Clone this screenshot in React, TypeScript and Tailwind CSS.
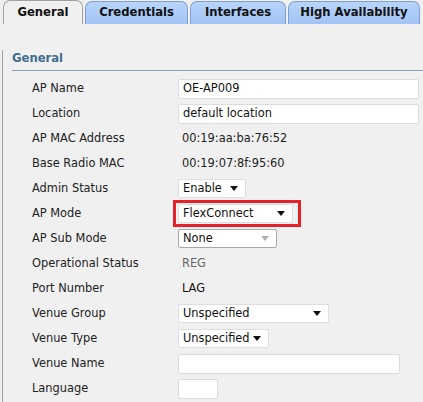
import React from "react";

const font = { fontFamily: '"DejaVu Sans", Verdana, sans-serif' };

function Tab({ label, active, w }: { label: string; active?: boolean; w: string }) {
  return (
    <div
      className={`${w} flex h-[23px] items-center justify-center rounded-t-[7px] border border-b-0 text-[11.6px] font-bold text-[#111] ${
        active ? "h-[24px] border-[#a0a0a0] bg-[#f0f0f0]" : "border-[#7f9fd0] bg-gradient-to-b from-[#b8d4fb] to-[#a2c4f4]"
      }`}
    >
      {label}
    </div>
  );
}

function Select({ value, w, disabled }: { value: string; w: string; disabled?: boolean }) {
  return (
    <div
      className={`${w} flex h-[19px] items-center justify-between rounded-[2px] border bg-white pl-[4px] pr-[7px] text-[11.4px] ${
        disabled ? "border-[#a8a8a8]" : "border-[#dedede]"
      }`}
    >
      <span className="text-[#111]">{value}</span>
      <span className={`h-0 w-0 border-x-[4px] border-t-[5px] border-x-transparent ${disabled ? "border-t-[#b0b0b0]" : "border-t-[#111]"}`} />
    </div>
  );
}

function Input({ value, w }: { value?: string; w: string }) {
  return (
    <div className={`${w} flex h-[20px] items-center rounded-[2px] border border-[#dcdcdc] bg-white pl-[4px] text-[11.4px] text-[#111]`}>
      {value}
    </div>
  );
}

function Row({ label, children }: { label: string; children: React.ReactNode }) {
  return (
    <div className="flex h-[25px] items-center">
      <div className="w-[175px] shrink-0 pl-[29px] text-[11.4px] text-[#222]">{label}</div>
      <div className="flex items-center">{children}</div>
    </div>
  );
}

export default function App() {
  return (
    <div className="h-[402px] w-[423px] overflow-hidden bg-[#f0f0f0]" style={font}>
      <div className="flex h-[24px] items-end gap-[2px] pl-[3px]">
        <Tab label="General" active w="w-[80px]" />
        <Tab label="Credentials" w="w-[103px]" />
        <Tab label="Interfaces" w="w-[96px]" />
        <Tab label="High Availability" w="w-[132px]" />
      </div>
      <div className="ml-[2px] h-[380px] border-l border-[#a0a0a0]">
        <div className="ml-[9px] mt-[26px] border-b border-[#8e9cc4] pb-[3px] text-[11.6px] font-bold text-[#3f6e8f]">General</div>
        <div className="pt-[5px]">
          <Row label="AP Name">
            <Input value="OE-AP009" w="w-[241px]" />
          </Row>
          <Row label="Location">
            <Input value="default location" w="w-[241px]" />
          </Row>
          <Row label="AP MAC Address">
            <span className="pl-[4px] text-[11.4px] text-[#222]">00:19:aa:ba:76:52</span>
          </Row>
          <Row label="Base Radio MAC">
            <span className="pl-[4px] text-[11.4px] text-[#222]">00:19:07:8f:95:60</span>
          </Row>
          <Row label="Admin Status">
            <Select value="Enable" w="w-[68px]" />
          </Row>
          <Row label="AP Mode">
            <div className="-ml-[5px] border-[3px] border-[#e8202a] py-[1px] pl-[2px] pr-[5px]">
              <Select value="FlexConnect" w="w-[115px]" />
            </div>
          </Row>
          <Row label="AP Sub Mode">
            <Select value="None" w="w-[99px]" disabled />
          </Row>
          <Row label="Operational Status">
            <span className="pl-[4px] text-[11.4px] text-[#666]">REG</span>
          </Row>
          <Row label="Port Number">
            <span className="pl-[4px] text-[11.4px] text-[#111]">LAG</span>
          </Row>
          <Row label="Venue Group">
            <Select value="Unspecified" w="w-[151px]" />
          </Row>
          <Row label="Venue Type">
            <Select value="Unspecified" w="w-[91px]" />
          </Row>
          <Row label="Venue Name">
            <Input w="w-[222px]" />
          </Row>
          <Row label="Language">
            <Input w="w-[40px]" />
          </Row>
        </div>
      </div>
    </div>
  );
}
